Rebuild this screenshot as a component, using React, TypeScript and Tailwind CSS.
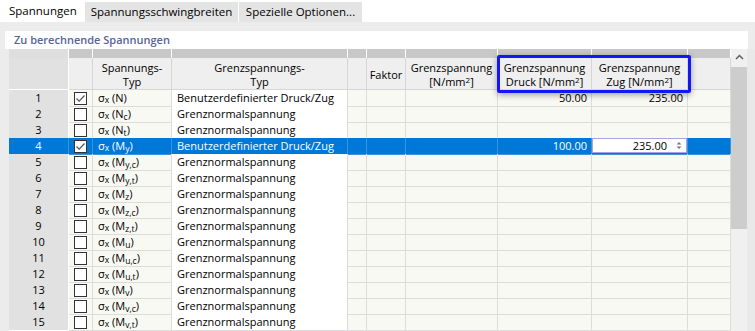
import React from 'react';

type Row = {
  n: number;
  checked: boolean;
  sub: string;
  typ: string;
  druck?: string;
  zug?: string;
};

const rows: Row[] = [
  { n: 1, checked: true, sub: '', typ: 'Benutzerdefinierter Druck/Zug', druck: '50.00', zug: '235.00' },
  { n: 2, checked: false, sub: 'c', typ: 'Grenznormalspannung' },
  { n: 3, checked: false, sub: 't', typ: 'Grenznormalspannung' },
  { n: 4, checked: true, sub: 'y', typ: 'Benutzerdefinierter Druck/Zug', druck: '100.00', zug: '235.00' },
  { n: 5, checked: false, sub: 'y,c', typ: 'Grenznormalspannung' },
  { n: 6, checked: false, sub: 'y,t', typ: 'Grenznormalspannung' },
  { n: 7, checked: false, sub: 'z', typ: 'Grenznormalspannung' },
  { n: 8, checked: false, sub: 'z,c', typ: 'Grenznormalspannung' },
  { n: 9, checked: false, sub: 'z,t', typ: 'Grenznormalspannung' },
  { n: 10, checked: false, sub: 'u', typ: 'Grenznormalspannung' },
  { n: 11, checked: false, sub: 'u,c', typ: 'Grenznormalspannung' },
  { n: 12, checked: false, sub: 'u,t', typ: 'Grenznormalspannung' },
  { n: 13, checked: false, sub: 'v', typ: 'Grenznormalspannung' },
  { n: 14, checked: false, sub: 'v,c', typ: 'Grenznormalspannung' },
  { n: 15, checked: false, sub: 'v,t', typ: 'Grenznormalspannung' },
];

// the first rows use N instead of M
const letter = (n: number) => (n <= 3 ? 'N' : 'M');

const Checkbox = ({ checked }: { checked: boolean }) => (
  <div className="w-[13px] h-[13px] border border-[#333] bg-white flex items-center justify-center">
    {checked && (
      <svg width="11" height="11" viewBox="0 0 11 11">
        <path d="M1.5 5.5 L4.2 8.2 L9.5 2.5" fill="none" stroke="#555" strokeWidth="1.2" />
      </svg>
    )}
  </div>
);

const Sup2 = () => <span className="text-[8px] leading-[8px] relative -top-[3px]">2</span>;

const grid =
  'grid grid-cols-[60px_24px_79px_176px_19px_39px_92px_94px_96px_43px]';

const App: React.FC = () => {
  return (
    <div className="w-[755px] h-[331px] overflow-hidden bg-white text-[11px] text-black font-['Open_Sans',sans-serif] flex flex-col">
      {/* tabs */}
      <div className="h-[22px] flex items-end shrink-0 text-[11.5px]">
        <div className="h-[22px] w-[84px] pl-[9px] flex items-center bg-white">Spannungen</div>
        <div className="h-[20px] w-[153px] ml-[1px] flex items-center justify-center bg-[#e4e4e4]">
          Spannungsschwingbreiten
        </div>
        <div className="h-[20px] w-[123px] ml-[1px] flex items-center justify-center bg-[#e4e4e4]">
          Spezielle Optionen...
        </div>
      </div>

      <div className="flex-1 bg-[#ececec] pt-[9px] flex flex-col">
        <div className="ml-[5px] mr-[7px] h-[18px] bg-white flex items-center pl-[9px] font-semibold text-[#56649a]">
          Zu berechnende Spannungen
        </div>

        <div className="flex flex-1">
          <div className="w-[9px] shrink-0" />
          <div className="relative w-[722px] shrink-0 bg-[#f9f9f4]">
            {/* top strip */}
            <div className={`${grid} h-[9px]`}>
              <div className="bg-[#dedede] border-r border-white" />
              {Array.from({ length: 9 }).map((_, i) => (
                <div key={i} className="bg-[#c8c8c8] border-r border-white" />
              ))}
            </div>

            {/* header */}
            <div className={`${grid} h-[32px] leading-[14px] text-center`}>
              <div className="bg-[#e1e1e1] border-r border-b border-white" />
              <div className="bg-[#efefef] border-r border-b border-[#d6d6d6]" />
              <div className="bg-[#efefef] border-r border-b border-[#d6d6d6] pt-[3px]">
                Spannungs-
                <br />
                Typ
              </div>
              <div className="bg-[#efefef] border-r border-b border-[#d6d6d6] pt-[3px]">
                Grenzspannungs-
                <br />
                Typ
              </div>
              <div className="bg-[#efefef] border-r border-b border-[#d6d6d6]" />
              <div className="bg-[#efefef] border-r border-b border-[#d6d6d6] flex items-center justify-center pt-[3px] overflow-hidden">
                Faktor
              </div>
              <div className="bg-[#efefef] border-r border-b border-[#d6d6d6] pt-[3px] whitespace-nowrap">
                Grenzspannung
                <br />
                [N/mm<Sup2 />]
              </div>
              <div className="bg-[#efefef] border-r border-b border-[#d6d6d6] pt-[3px] whitespace-nowrap">
                Grenzspannung
                <br />
                Druck [N/mm<Sup2 />]
              </div>
              <div className="bg-[#efefef] border-r border-b border-[#d6d6d6] pt-[3px] whitespace-nowrap">
                Grenzspannung
                <br />
                Zug [N/mm<Sup2 />]
              </div>
              <div className="bg-[#efefef] border-r border-b border-[#d6d6d6]" />
            </div>

            {/* body */}
            {rows.map((r) => {
              const sel = r.n === 4;
              const line = sel ? 'border-[#3d92dc]' : 'border-[#dcdcdc]';
              const cell = `border-r border-b ${line} ${sel ? 'bg-[#0078d7] text-white' : ''}`;
              return (
                <div key={r.n} className={`${grid} h-[16px] leading-[15px]`}>
                  <div
                    className={`border-r border-b text-center ${
                      sel ? 'bg-[#0078d7] text-white border-[#3d92dc]' : 'bg-[#e1e1e1] border-white'
                    }`}
                  >
                    {r.n}
                  </div>
                  <div className={`${cell} flex items-center justify-center`}>
                    <Checkbox checked={r.checked} />
                  </div>
                  <div className={`${cell} pl-[5px] whitespace-nowrap`}>
                    σ<span className="text-[8.5px] relative top-[1px]">x</span> ({letter(r.n)}
                    {r.sub && <span className="text-[8.5px] relative top-[2px]">{r.sub}</span>})
                  </div>
                  <div className={`${cell} ${sel ? '' : 'bg-white'} pl-[5px] whitespace-nowrap`}>{r.typ}</div>
                  <div className={cell} />
                  <div className={cell} />
                  <div className={cell} />
                  <div className={`${cell} text-right pr-[4px]`}>{r.druck}</div>
                  {sel ? (
                    <div className={`border-r border-b ${line} bg-[#0078d7]`}>
                      <div className="h-[15px] bg-white border border-[#a3a3e6] text-black flex items-center justify-end pr-[4px] gap-[9px]">
                        <span>{r.zug}</span>
                        <svg width="6" height="9" viewBox="0 0 6 9">
                          <path d="M0.5 3.5 L3 1 L5.5 3.5 Z M0.5 5.5 L3 8 L5.5 5.5 Z" fill="#777" />
                        </svg>
                      </div>
                    </div>
                  ) : (
                    <div className={`${cell} text-right pr-[4px]`}>{r.zug}</div>
                  )}
                  <div className={cell} />
                </div>
              );
            })}

            {/* highlight frame over the Druck/Zug headers */}
            <div className="absolute left-[488px] top-[6px] w-[194px] h-[38px] border-[3px] border-[#1515f5] rounded-[2px] shadow-[0_2px_6px_rgba(0,0,0,0.35)]" />
          </div>

          {/* scrollbar */}
          <div className="w-[16px] shrink-0 flex flex-col bg-[#f0f0f0]">
            <div className="h-[18px] flex items-start justify-center pt-[5px]">
              <svg width="9" height="6" viewBox="0 0 9 6">
                <path d="M1 5 L4.5 1.5 L8 5" fill="none" stroke="#606060" strokeWidth="1.5" />
              </svg>
            </div>
            <div className="h-[162px] bg-[#cdcdcd]" />
          </div>
          <div className="flex-1 bg-[#e9e9e9]" />
        </div>
      </div>
    </div>
  );
};

export default App;
